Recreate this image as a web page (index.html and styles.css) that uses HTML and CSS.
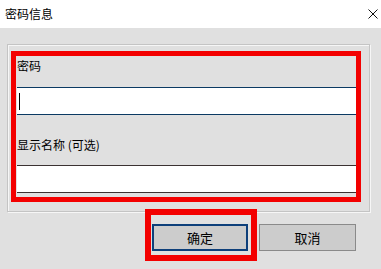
FILE: index.html
```html
<!DOCTYPE html>
<html lang="zh-CN">
<head>
    <meta charset="UTF-8">
    <meta name="viewport" content="width=device-width, initial-scale=1.0">
    <title>密码信息</title>
    <link rel="stylesheet" href="styles.css">
</head>
<body>
    <div class="dialog">
        <!-- Title bar -->
        <div class="titlebar">
            <span class="title">密码信息</span>
            <svg class="close" viewBox="0 0 10 10">
                <path d="M0.5 0.5 L9.5 9.5 M9.5 0.5 L0.5 9.5" stroke="#111" stroke-width="1" fill="none"/>
            </svg>
        </div>

        <div class="content">
            <!-- Fields -->
            <div class="group">
                <div class="highlight fields">
                    <label class="field-label">密码</label>
                    <div class="input focused"><span class="caret"></span></div>
                    <label class="field-label second">显示名称 (可选)</label>
                    <div class="input plain"></div>
                </div>
            </div>

            <!-- Buttons -->
            <div class="actions">
                <div class="highlight ok-wrap">
                    <button class="btn default">确定</button>
                </div>
                <button class="btn cancel">取消</button>
            </div>
        </div>
    </div>
</body>
</html>
```

FILE: styles.css
```css
/* Global Styles */
* {
    margin: 0;
    padding: 0;
    box-sizing: border-box;
    font-family: "Noto Sans CJK SC", "Noto Sans", sans-serif;
}

body {
    width: 381px;
    height: 269px;
    background: #e0e0e0;
    overflow: hidden;
    color: #000;
}

.titlebar {
    height: 28px;
    background: #fff;
    display: flex;
    align-items: center;
    justify-content: space-between;
    padding: 0 3px 1px 5px;
}

.title {
    font-size: 12px;
    line-height: 16px;
}

.close {
    width: 10px;
    height: 10px;
}

.content {
    padding: 16px 11px 0 7px;
}

/* Group box */
.group {
    height: 168px;
    border: 1px solid #c4c4c4;
    box-shadow: inset 1px 1px 0 #f6f6f6, 1px 1px 0 #f6f6f6;
    padding: 6px 8px 9px 3px;
}

.highlight {
    border: 5px solid #f30000;
}

.fields {
    display: flex;
    flex-direction: column;
    padding: 2px 0 4px 1px;
}

.field-label {
    font-size: 12px;
    line-height: 16px;
}

.field-label.second {
    margin-top: 22px;
}

.input {
    height: 28px;
    background: #fff;
    padding: 5px 2px;
}

.input.focused {
    margin-top: 13px;
    border-top: 1px solid #0b3a63;
    border-bottom: 1px solid #0b3a63;
}

.input.plain {
    margin-top: 12px;
    border-top: 1px solid #3b3232;
    border-bottom: 1px solid #3b3232;
}

.caret {
    display: block;
    width: 1px;
    height: 17px;
    background: #000;
}

/* Buttons */
.actions {
    display: flex;
    justify-content: flex-end;
    align-items: flex-start;
    margin-top: -3px;
    padding-right: 14px;
}

.ok-wrap {
    border-width: 6px;
    padding: 9px 3px 4px 1px;
}

.btn {
    width: 97px;
    height: 27px;
    font-size: 13px;
    background: #cccccc;
    border: 1px solid #8a8a8a;
    color: #000;
}

.btn.default {
    width: 96px;
    border: 2px solid #0d3f7a;
}

.btn.cancel {
    margin-top: 15px;
    margin-left: 2px;
}
```
